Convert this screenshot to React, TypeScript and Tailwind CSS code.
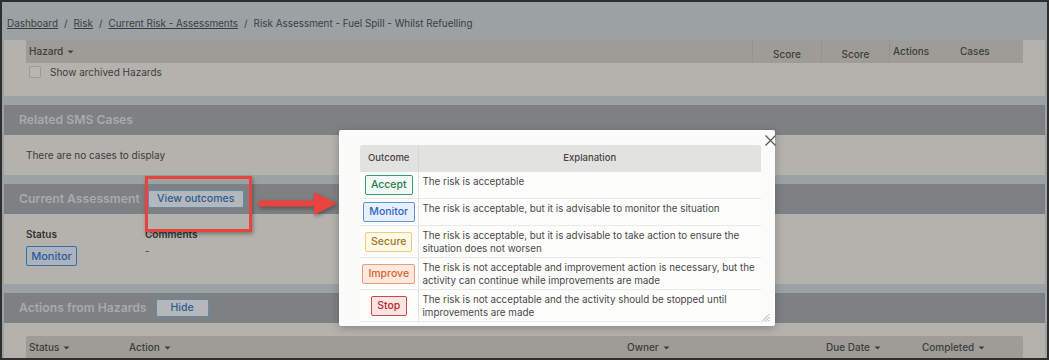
import React from 'react';

const Caret = () => (
  <svg width="7" height="4" viewBox="0 0 7 4" className="ml-[4px] inline-block">
    <path d="M0.5 0.5 L6.5 0.5 L3.5 3.5 Z" fill="#3f3f3f" />
  </svg>
);

const PanelHeader = ({ title, children }: { title: string; children?: React.ReactNode }) => (
  <div className="h-[30px] bg-[#7e8183] flex items-center pl-[15px]">
    <span className="text-[12.2px] font-semibold text-[#a8aaac]">{title}</span>
    {children}
  </div>
);

const DimButton = ({ label, className }: { label: string; className?: string }) => (
  <button
    className={
      'h-[18px] rounded-[2px] border border-[#6a87ad] bg-[#b4b8bb] text-[10.5px] font-medium text-[#2e5b94] leading-none ' +
      (className ?? '')
    }
  >
    {label}
  </button>
);

const outcomes = [
  {
    label: 'Accept',
    text: 'The risk is acceptable',
    badge: 'w-[48px] border-[#3d9a6b] bg-[#f2faf5] text-[#2d7d54]',
  },
  {
    label: 'Monitor',
    text: 'The risk is acceptable, but it is advisable to monitor the situation',
    badge: 'w-[52px] border-[#5f93d9] bg-[#e8f0fd] text-[#2d66bd]',
  },
  {
    label: 'Secure',
    text: 'The risk is acceptable, but it is advisable to take action to ensure the situation does not worsen',
    badge: 'w-[47px] border-[#f0cf74] bg-[#fff9e8] text-[#9b7a1c]',
  },
  {
    label: 'Improve',
    text: 'The risk is not acceptable and improvement action is necessary, but the activity can continue while improvements are made',
    badge: 'w-[53px] border-[#f09b72] bg-[#fde9df] text-[#d8632d]',
  },
  {
    label: 'Stop',
    text: 'The risk is not acceptable and the activity should be stopped until improvements are made',
    badge: 'w-[36px] border-[#c84b4b] bg-[#fbe4e4] text-[#b72b2b]',
  },
];

const OutcomesModal = () => (
  <div className="absolute left-[337px] top-[128px] w-[436px] h-[196px] bg-[#fbfbf9] shadow-[0_2px_8px_rgba(0,0,0,0.25)] rounded-[2px]">
    <svg width="11" height="11" viewBox="0 0 11 11" className="absolute right-[-1px] top-[5px]">
      <path d="M0.5 0.5 L10.5 10.5 M10.5 0.5 L0.5 10.5" stroke="#555" strokeWidth="1.2" />
    </svg>
    <div className="absolute left-[21px] top-[15px] w-[401px]">
      <table className="w-full border-collapse text-[#484848]">
        <thead>
          <tr className="bg-[#e2e2e0] h-[27px] text-[9.5px] text-[#454545]">
            <th className="w-[58px] font-medium border-r border-[#d6d6d4] rounded-tl-[3px]">Outcome</th>
            <th className="font-medium rounded-tr-[3px]">Explanation</th>
          </tr>
        </thead>
        <tbody className="bg-[#fdfdfc]">
          {outcomes.map((o) => (
            <tr key={o.label} className="border-b border-[#e9e9e7]">
              <td className="align-middle py-[3px] border-r border-[#e3e3e1]">
                <div
                  className={
                    'mx-auto h-[20px] rounded-[2px] border-[1.5px] flex items-center justify-center text-[10.5px] font-medium ' +
                    o.badge
                  }
                >
                  {o.label}
                </div>
              </td>
              <td className="align-top pt-[3px] pb-[2px] pl-[4px] pr-[1px] text-[9.8px] leading-[13px]">{o.text}</td>
            </tr>
          ))}
        </tbody>
      </table>
    </div>
    <svg width="9" height="9" viewBox="0 0 9 9" className="absolute right-[5px] bottom-[4px]">
      <path d="M8.5 1 L1 8.5 M8.5 4 L4 8.5 M8.5 7 L7 8.5" stroke="#9a9a9a" strokeWidth="0.8" />
    </svg>
  </div>
);

export default function App() {
  return (
    <div className="relative w-[1049px] h-[360px] overflow-hidden border-2 border-[#2e2e2e] bg-[#9ca1a4] font-['Inter','Liberation_Sans',sans-serif] text-[#3a3a3a]">
      <div className="px-[2px]">
        {/* breadcrumb */}
        <div className="h-[38px] flex items-center pt-[4px] pl-[3px] text-[9.9px] text-[#3b3e41]">
          <a className="underline">Dashboard</a>
          <span className="mx-[6px]">/</span>
          <a className="underline">Risk</a>
          <span className="mx-[6px]">/</span>
          <a className="underline">Current Risk - Assessments</a>
          <span className="mx-[6px]">/</span>
          <span>Risk Assessment - Fuel Spill - Whilst Refuelling</span>
        </div>

        {/* hazards */}
        <div className="h-[56px] bg-[#b4b2ad]">
          <div className="mx-[22px] h-[23px] bg-[#9d9c96] flex text-[10px] font-medium text-[#3d3d3d]">
            <div className="w-[726px] flex items-center pl-[3px]">
              Hazard
              <Caret />
            </div>
            <div className="w-[69px] border-l border-[#959490] flex flex-col items-center">
              <div className="mt-[8px] leading-[12px]">Score</div>
            </div>
            <div className="w-[68px] border-l border-[#959490] flex flex-col items-center">
              <div className="mt-[8px] leading-[12px]">Score</div>
            </div>
            <div className="w-[67px] border-l border-[#959490] flex items-center pl-[3px]">Actions</div>
            <div className="flex-1 flex items-center pl-[4px]">Cases</div>
          </div>
          <div className="flex items-center pl-[25px] mt-[3px] h-[12px]">
            <div className="w-[12px] h-[12px] rounded-[2px] border border-[#9c9b96] bg-[#b9b7b2]" />
            <span className="ml-[9px] text-[10px] text-[#3d3d3d]">Show archived Hazards</span>
          </div>
        </div>

        <div className="h-[9px]" />

        {/* related cases */}
        <PanelHeader title="Related SMS Cases" />
        <div className="h-[40px] bg-[#b4b2ad] flex items-center pl-[22px] text-[10px]">There are no cases to display</div>

        <div className="h-[9px]" />

        {/* current assessment */}
        <PanelHeader title="Current Assessment">
          <DimButton label="View outcomes" className="ml-[8px] w-[96px]" />
        </PanelHeader>
        <div className="h-[70px] bg-[#b4b2ad] pt-[14px] pl-[22px] flex text-[10px]">
          <div className="w-[119px]">
            <div className="font-semibold text-[#333] leading-[13px]">Status</div>
            <div className="mt-[5px] w-[51px] h-[20px] rounded-[2px] border border-[#3c6cab] bg-[#adb3bc] text-[#2b5b9b] text-[11px] font-medium flex items-center justify-center">
              Monitor
            </div>
          </div>
          <div>
            <div className="font-semibold text-[#333] leading-[13px]">Comments</div>
            <div className="mt-[4px] leading-[13px]">-</div>
          </div>
        </div>

        <div className="h-[9px]" />

        {/* actions from hazards */}
        <PanelHeader title="Actions from Hazards">
          <DimButton label="Hide" className="ml-[9px] w-[53px]" />
        </PanelHeader>
        <div className="h-[40px] bg-[#b4b2ad] pt-[13px]">
          <div className="mx-[22px] h-[23px] bg-[#9d9c96] flex text-[10px] font-medium text-[#3d3d3d] rounded-t-[2px]">
            <div className="w-[100px] flex items-center pl-[3px]">
              Status
              <Caret />
            </div>
            <div className="w-[497px] flex items-center pl-[3px]">
              Action
              <Caret />
            </div>
            <div className="w-[197px] flex items-center pl-[4px]">
              Owner
              <Caret />
            </div>
            <div className="w-[99px] flex items-center pl-[6px]">
              Due Date
              <Caret />
            </div>
            <div className="flex-1 flex items-center pl-[3px]">
              Completed
              <Caret />
            </div>
          </div>
        </div>
      </div>

      {/* annotation: highlight box + arrow */}
      <div className="absolute left-[143px] top-[174px] w-[107px] h-[56px] border-[3.5px] border-[#e8433f] shadow-[1px_2px_4px_rgba(0,0,0,0.35)]" />
      <svg
        width="84"
        height="36"
        viewBox="0 0 84 36"
        className="absolute left-[254px] top-[184px]"
        style={{ filter: 'drop-shadow(1px 2px 2px rgba(0,0,0,0.35))' }}
      >
        <path d="M5 17.5 L60 17.5" stroke="#ea4340" strokeWidth="6" strokeLinecap="round" />
        <path d="M58 6 L81 17.5 L58 29 Z" fill="#ea4340" />
      </svg>

      <OutcomesModal />
    </div>
  );
}
